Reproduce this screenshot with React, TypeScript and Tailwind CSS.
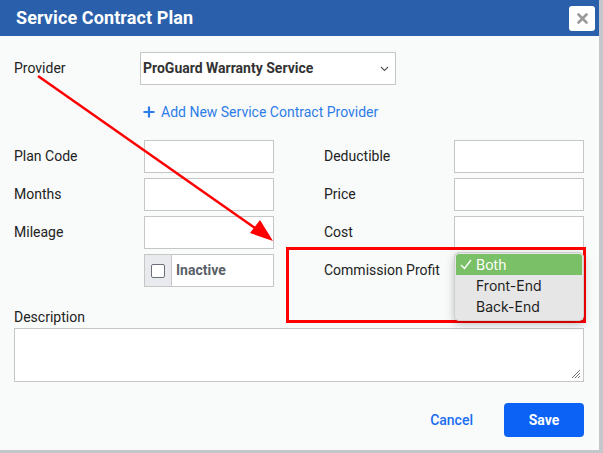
export default function App() {
  return (
    <div className="relative w-full h-[453px] bg-[#c3c7cb] font-['Roboto',sans-serif] overflow-hidden">
      <div className="w-[599px] h-[450px] bg-[#f9fafa] flex flex-col">
        {/* Header */}
        <div className="h-[36px] bg-[#2a60ab] flex items-center justify-between pl-[16px] pr-[4px]">
          <h1 className="text-white font-bold text-[18px] leading-none tracking-[0.1px]">Service Contract Plan</h1>
          <button className="w-[26px] h-[25px] bg-white rounded-[3px] flex items-center justify-center">
            <svg width="11" height="11" viewBox="0 0 11 11">
              <path d="M1.5 1.5 L9.5 9.5 M9.5 1.5 L1.5 9.5" stroke="#9a9a9a" strokeWidth="2.6" strokeLinecap="round" />
            </svg>
          </button>
        </div>

        {/* Body */}
        <div className="pl-[14px] pr-[15px] pt-[16px] text-[14px] text-[#222]">
          {/* Provider */}
          <div className="flex items-center h-[33px]">
            <label className="w-[126px]">Provider</label>
            <div className="w-[256px] h-[33px] bg-white border border-[#c6c6c6] flex items-center justify-between pl-[2px] pr-[6px]">
              <span className="font-bold text-[#333]">ProGuard Warranty Service</span>
              <svg width="9" height="6" viewBox="0 0 9 6">
                <path d="M1 1 L4.5 4.5 L8 1" stroke="#555" strokeWidth="1.1" fill="none" />
              </svg>
            </div>
          </div>

          {/* Add link */}
          <div className="flex items-center h-[20px] mt-[17px] ml-[129px] text-[#2d7de8] gap-[6px]">
            <svg width="12" height="12" viewBox="0 0 12 12">
              <path d="M6 0.5 V11.5 M0.5 6 H11.5" stroke="#2d7de8" strokeWidth="2.2" />
            </svg>
            <span className="text-[14px]">Add New Service Contract Provider</span>
          </div>

          {/* Grid of fields */}
          <div className="grid grid-cols-[130px_130px_50px_130px_130px] gap-y-[5px] mt-[18px]">
            <label className="self-center">Plan Code</label>
            <input className="h-[33px] bg-white border border-[#c6c6c6]" />
            <div />
            <label className="self-center">Deductible</label>
            <input className="h-[33px] bg-white border border-[#c6c6c6]" />

            <label className="self-center">Months</label>
            <input className="h-[33px] bg-white border border-[#c6c6c6]" />
            <div />
            <label className="self-center">Price</label>
            <input className="h-[33px] bg-white border border-[#c6c6c6]" />

            <label className="self-center">Mileage</label>
            <input className="h-[33px] bg-white border border-[#c6c6c6]" />
            <div />
            <label className="self-center">Cost</label>
            <input className="h-[33px] bg-white border border-[#c6c6c6]" />

            <div />
            <div className="h-[33px] flex border border-[#c6c6c6] bg-white">
              <div className="w-[27px] bg-[#e8eaee] border-r border-[#c6c6c6] flex items-center justify-center">
                <div className="w-[14px] h-[14px] bg-white border-[1.5px] border-[#6b6f78] rounded-[2px]" />
              </div>
              <span className="self-center ml-[4px] font-bold text-[#5a5f68]">Inactive</span>
            </div>
            <div />
            <label className="self-center">Commission Profit</label>
            <div className="relative h-[33px]">
              <div className="absolute left-0 top-[-2px] w-[130px] h-[69px] bg-[#e6e6e6] border border-[#cfcfcf] rounded-[5px] shadow-[0_3px_8px_rgba(0,0,0,0.25)] p-[1px] font-['Inter',sans-serif] text-[14px] text-[#1e1e1e] z-10">
                <div className="h-[21px] bg-[#79c066] text-white flex items-center rounded-t-[3px] pl-[4px]">
                  <svg className="mr-[4px]" width="12" height="11" viewBox="0 0 12 11">
                    <path d="M1 6 L4.5 9.5 L11 1" stroke="#fff" strokeWidth="1.4" fill="none" />
                  </svg>
                  <span>Both</span>
                </div>
                <div className="h-[21px] flex items-center pl-[20px]">Front-End</div>
                <div className="h-[21px] flex items-center pl-[20px]">Back-End</div>
              </div>
            </div>
          </div>

          {/* Description */}
          <label className="block mt-[22px] leading-[16px]">Description</label>
          <div className="relative mt-[3px] h-[54px] bg-white border border-[#c6c6c6]">
            <svg className="absolute right-[2px] bottom-[2px]" width="10" height="10" viewBox="0 0 10 10">
              <path d="M9 1 L1 9 M9 4 L4 9 M9 7 L7 9" stroke="#777" strokeWidth="1" />
            </svg>
          </div>

          {/* Footer */}
          <div className="flex items-center justify-end mt-[21px] gap-[31px]">
            <button className="text-[#1a6ef0] font-medium text-[14px]">Cancel</button>
            <button className="w-[80px] h-[34px] bg-[#0b62f5] text-white font-bold rounded-[4px] text-[14px]">Save</button>
          </div>
        </div>
      </div>

      {/* Annotations */}
      <svg className="absolute left-0 top-0 pointer-events-none" width="603" height="453" viewBox="0 0 603 453">
        <rect x="287.5" y="248.5" width="297" height="73" fill="none" stroke="#f00" strokeWidth="3" />
        <line x1="38" y1="76" x2="262" y2="233" stroke="#f00" strokeWidth="2.5" />
        <path d="M273 241 L250 233 L260 220 Z" fill="#f00" />
      </svg>
    </div>
  )
}
